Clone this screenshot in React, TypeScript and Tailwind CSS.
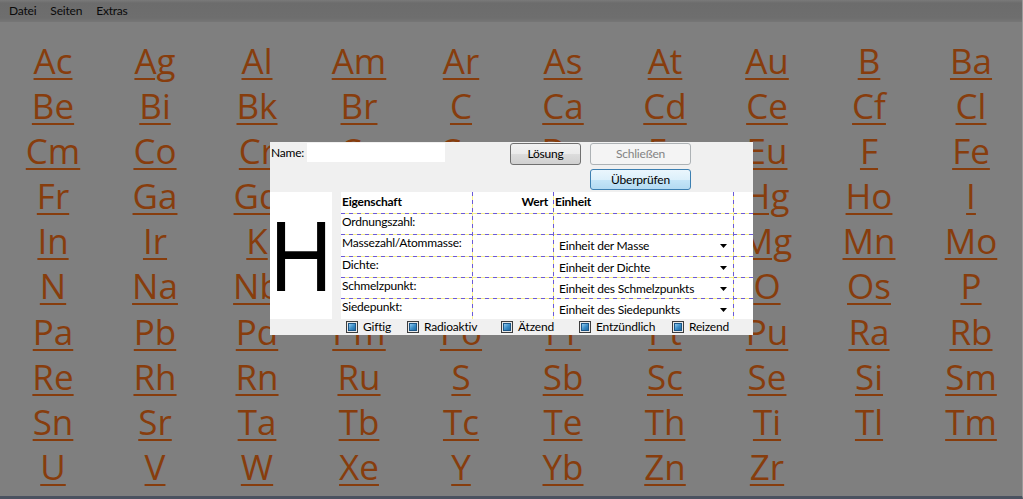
import React from "react";

const rows: string[][] = [
  ["Ac", "Ag", "Al", "Am", "Ar", "As", "At", "Au", "B", "Ba"],
  ["Be", "Bi", "Bk", "Br", "C", "Ca", "Cd", "Ce", "Cf", "Cl"],
  ["Cm", "Co", "Cr", "Cs", "Cu", "Dy", "Er", "Eu", "F", "Fe"],
  ["Fr", "Ga", "Gd", "Ge", "H", "He", "Hf", "Hg", "Ho", "I"],
  ["In", "Ir", "K", "Kr", "La", "Li", "Lu", "Mg", "Mn", "Mo"],
  ["N", "Na", "Nb", "Nd", "Ne", "Ni", "Np", "O", "Os", "P"],
  ["Pa", "Pb", "Pd", "Pm", "Po", "Pr", "Pt", "Pu", "Ra", "Rb"],
  ["Re", "Rh", "Rn", "Ru", "S", "Sb", "Sc", "Se", "Si", "Sm"],
  ["Sn", "Sr", "Ta", "Tb", "Tc", "Te", "Th", "Ti", "Tl", "Tm"],
  ["U", "V", "W", "Xe", "Y", "Yb", "Zn", "Zr"],
];

const properties = [
  { label: "Ordnungszahl:", unit: null },
  { label: "Massezahl/Atommasse:", unit: "Einheit der Masse" },
  { label: "Dichte:", unit: "Einheit der Dichte" },
  { label: "Schmelzpunkt:", unit: "Einheit des Schmelzpunkts" },
  { label: "Siedepunkt:", unit: "Einheit des Siedepunkts" },
];

const hazards = [
  { label: "Giftig", width: "w-[61px]" },
  { label: "Radioaktiv", width: "w-[94px]" },
  { label: "Ätzend", width: "w-[78px]" },
  { label: "Entzündlich", width: "w-[93px]" },
  { label: "Reizend", width: "w-[70px]" },
];

function HLine({ top }: { top: string }) {
  return (
    <div
      className={`pointer-events-none absolute left-0 right-0 h-px ${top} bg-[repeating-linear-gradient(90deg,#6b5ad8_0_4px,#f6f08a_4px_8px)]`}
    />
  );
}

function VLine({ left }: { left: string }) {
  return (
    <div
      className={`pointer-events-none absolute top-0 bottom-0 w-px ${left} bg-[repeating-linear-gradient(180deg,#6b5ad8_0_4px,#f6f08a_4px_8px)]`}
    />
  );
}

function HazardBox({ label, width }: { label: string; width: string }) {
  return (
    <label className={`flex items-center gap-[5px] ${width}`}>
      <span className="flex h-[12px] w-[12px] items-center justify-center border border-[#3d3d3d] bg-[#e8e8e8]">
        <span className="h-[8px] w-[8px] border border-[#1b5686] bg-[linear-gradient(135deg,#8fcaf0_0%,#3a8cc6_55%,#1f6aa3_100%)]" />
      </span>
      <span>{label}</span>
    </label>
  );
}

export default function App() {
  return (
    <div className="relative h-[499px] w-[1023px] overflow-hidden border-r border-b-[3px] border-r-[#9a9a9a] border-b-[#4a5260] bg-[#7f7f7f] font-['Open_Sans',sans-serif]">
      <div className="flex h-[22px] items-center bg-[linear-gradient(#7a7a7a_0px,#6c6c6c_3px,#6e6e6e_18px,#767676_22px)] pl-[2px] font-['Lato',sans-serif] text-[12px] tracking-[-0.2px] text-[#0a0a0a]">
        <span className="px-[7px]">Datei</span>
        <span className="px-[7px]">Seiten</span>
        <span className="px-[7px]">Extras</span>
      </div>

      <div className="grid grid-cols-[repeat(10,102px)] grid-rows-[repeat(10,45.1px)] pl-[2px] pt-[16px]">
        {rows.flat().map((symbol) => (
          <div key={symbol} className="flex justify-center">
            <a className="cursor-pointer text-[35px] leading-[45px] text-[#873d0d] underline decoration-[2px] underline-offset-[4px]">
              {symbol}
            </a>
          </div>
        ))}
      </div>

      <div className="absolute left-[270px] top-[142px] flex h-[193px] w-[483px] flex-col bg-[#f0f0f0] font-['Lato',sans-serif] text-[12px] tracking-[-0.2px] text-black">
        <div className="flex h-[50px]">
          <div className="flex items-start pl-[1px] pt-[1px]">
            <span className="w-[36px] leading-[19px]">Name:</span>
            <div className="h-[19px] w-[138px] bg-white" />
          </div>
          <div className="ml-[65px] flex items-start pt-[1px]">
            <button className="h-[22px] w-[71px] rounded-[3px] border border-[#707070] bg-[linear-gradient(#f2f2f2_0%,#ebebeb_50%,#dddddd_50%,#d0d0d0_100%)] leading-[20px]">
              Lösung
            </button>
            <div className="ml-[9px] flex flex-col gap-[4px]">
              <button className="h-[22px] w-[101px] rounded-[3px] border border-[#adb2b5] bg-[#f4f4f4] leading-[20px] text-[#838383]">
                Schließen
              </button>
              <button className="h-[21px] w-[101px] rounded-[3px] border border-[#3c7fb1] bg-[linear-gradient(#eaf6fd_0%,#dcf0fb_50%,#c6e6f8_50%,#b3daf2_100%)] leading-[19px]">
                Überprüfen
              </button>
            </div>
          </div>
        </div>

        <div className="flex h-[127px]">
          <div className="flex w-[62px] items-center justify-center overflow-hidden bg-white font-['Liberation_Sans',sans-serif] text-[100px] leading-none">
            <span className="inline-block scale-x-[0.86]">H</span>
          </div>
          <div className="relative ml-[9px] grid w-[412px] grid-cols-[131px_81px_180px_20px] grid-rows-[21px_21px_22px_21px_21px_21px] bg-white">
            <div className="pl-[1px] font-bold leading-[20px]">Eigenschaft</div>
            <div className="pr-[5px] text-right font-bold leading-[20px]">Wert</div>
            <div className="pl-[2px] font-bold leading-[20px]">Einheit</div>
            <div />
            {properties.map((p) => (
              <React.Fragment key={p.label}>
                <div className="whitespace-nowrap pl-[1px] leading-[18px]">{p.label}</div>
                <div />
                <div className="flex items-center justify-between pl-[6px] pr-[6px] pt-[2px]">
                  {p.unit ? (
                    <>
                      <span>{p.unit}</span>
                      <svg width="7" height="4" viewBox="0 0 7 4">
                        <path d="M0 0h7L3.5 4z" fill="#000" />
                      </svg>
                    </>
                  ) : null}
                </div>
                <div />
              </React.Fragment>
            ))}
            <HLine top="top-[21px]" />
            <HLine top="top-[42px]" />
            <HLine top="top-[64px]" />
            <HLine top="top-[85px]" />
            <HLine top="top-[106px]" />
            <VLine left="left-[131px]" />
            <VLine left="left-[212px]" />
            <VLine left="left-[392px]" />
          </div>
        </div>

        <div className="flex h-[16px] items-center pl-[76px]">
          {hazards.map((h) => (
            <HazardBox key={h.label} label={h.label} width={h.width} />
          ))}
        </div>
      </div>
    </div>
  );
}
